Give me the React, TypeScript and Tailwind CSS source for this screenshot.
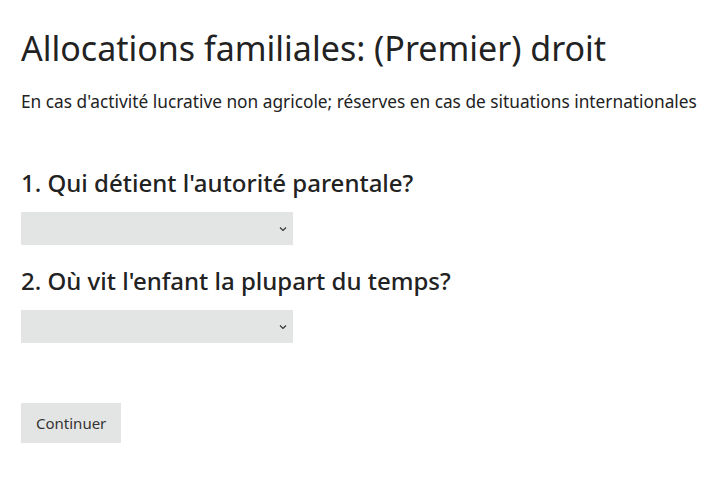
import { useState } from "react";

const Chevron = () => (
    <svg width="8" height="5" viewBox="0 0 8 5" className="pointer-events-none absolute right-[6px] top-1/2 -translate-y-1/2">
        <path d="M1 1l3 3 3-3" fill="none" stroke="#333" strokeWidth="1.2" />
    </svg>
);

const Question = ({ label, value, onChange }: { label: string; value: string; onChange: (v: string) => void }) => {
    return (
        <div>
            <h2 className="text-[24px] leading-[28px] font-medium text-[#222]">{label}</h2>
            <div className="relative mt-[15px] w-[272px]">
                <select
                    value={value}
                    onChange={(e) => onChange(e.target.value)}
                    className="block h-[33px] w-full appearance-none bg-[#e3e5e4] px-2 text-[15px] text-[#222] outline-none"
                >
                    <option value=""></option>
                </select>
                <Chevron />
            </div>
        </div>
    );
};

export default function App() {
    const [q1, setQ1] = useState("");
    const [q2, setQ2] = useState("");

    return (
        <div className="min-h-[498px] bg-white px-[21px] pt-[26px] font-['Noto_Sans',sans-serif] text-[#222]">
            <h1 className="text-[34px] leading-[44px] font-normal text-[#222]">
                Allocations familiales: (Premier) droit
            </h1>
            <p className="mt-[20px] text-[17.3px] leading-[24px]">
                En cas d'activité lucrative non agricole; réserves en cas de situations internationales
            </p>
            <div className="mt-[55px] flex flex-col gap-[22px]">
                <Question label="1. Qui détient l'autorité parentale?" value={q1} onChange={setQ1} />
                <Question label="2. Où vit l'enfant la plupart du temps?" value={q2} onChange={setQ2} />
            </div>
            <button className="mt-[60px] h-[40px] bg-[#e3e5e4] px-[15px] text-[15px] text-[#333]">
                Continuer
            </button>
        </div>
    );
}
